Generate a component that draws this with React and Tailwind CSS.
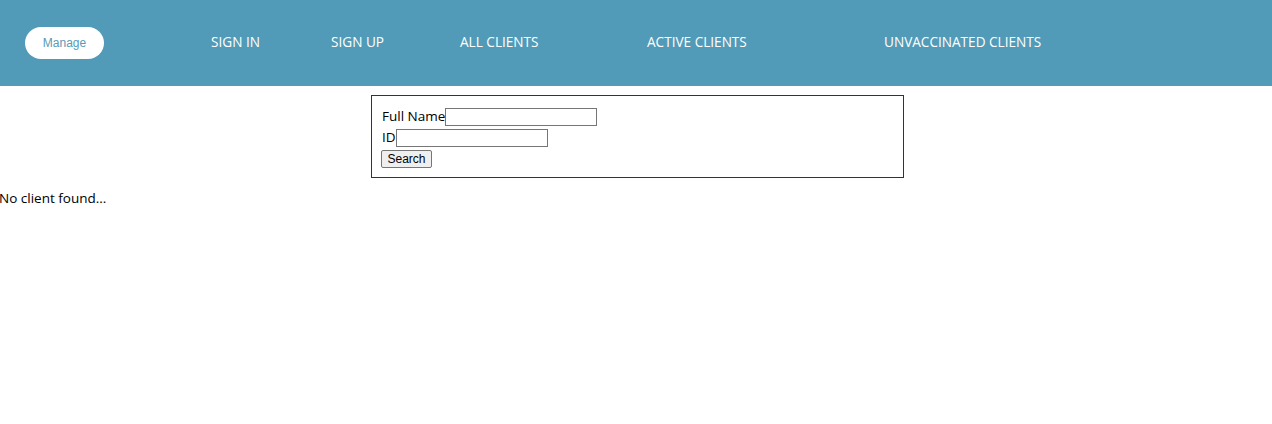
import React from "react";

const navItems = [
  { label: "SIGN IN", w: "w-[120px]" },
  { label: "SIGN UP", w: "w-[129px]" },
  { label: "ALL CLIENTS", w: "w-[187px]" },
  { label: "ACTIVE CLIENTS", w: "w-[237px]" },
  { label: "UNVACCINATED CLIENTS", w: "w-[200px]" },
];

function Header() {
  return (
    <header className="flex h-[86px] items-center bg-[#519bb8] font-['Open_Sans',sans-serif]">
      <button className="ml-[25px] flex h-[32px] w-[79px] items-center justify-center rounded-full bg-white font-['Liberation_Sans',sans-serif] text-[12px] text-[#5a9ab4]">
        Manage
      </button>
      <nav className="ml-[107px] mb-[2px] flex items-center">
        {navItems.map((item) => (
          <a key={item.label} className={`${item.w} text-[13.6px] text-white`}>
            {item.label}
          </a>
        ))}
      </nav>
    </header>
  );
}

function SearchForm() {
  return (
    <form className="ml-[371px] mt-[9px] w-[533px] border border-[#333] px-[10px] pt-[10px] pb-[8px] font-['Open_Sans',sans-serif] text-[13.5px] text-black">
      <div className="flex h-[21px] items-center">
        <label>Full Name</label>
        <input className="h-[18px] w-[152px] border border-[#767676]" />
      </div>
      <div className="flex h-[21px] items-center">
        <label>ID</label>
        <input className="h-[18px] w-[152px] border border-[#767676]" />
      </div>
      <div className="flex h-[21px] items-center">
        <button
          type="button"
          className="-ml-px h-[18px] w-[51px] rounded-[2px] border border-[#767676] bg-[#efefef] font-['Liberation_Sans',sans-serif] text-[12px] leading-none"
        >
          Search
        </button>
      </div>
    </form>
  );
}

export default function App() {
  return (
    <div className="min-h-[424px] bg-white">
      <Header />
      <SearchForm />
      <p className="mt-[10px] -ml-[1px] h-[20px] font-['Open_Sans',sans-serif] text-[13.5px] leading-[20px] text-black">
        No client found...
      </p>
    </div>
  );
}
